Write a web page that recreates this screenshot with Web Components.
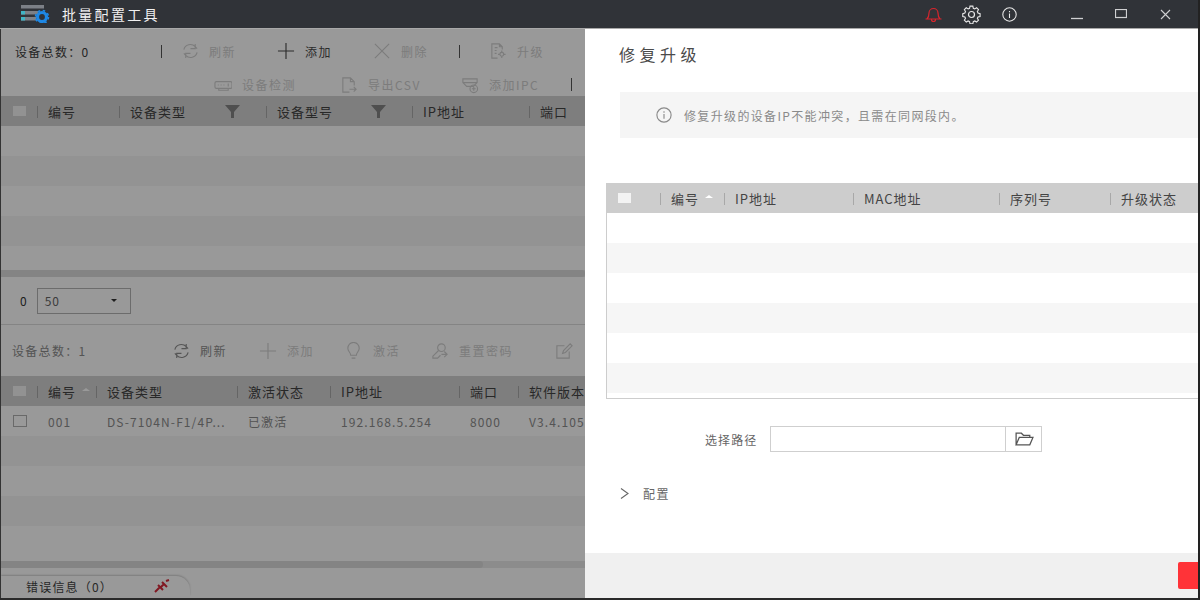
<!DOCTYPE html>
<html lang="zh">
<head>
<meta charset="utf-8">
<title>批量配置工具</title>
<style>
  html, body { margin: 0; height: 100%; overflow: hidden; background: #222; }
  body { font: 13px "Noto Sans CJK SC", "Liberation Sans", sans-serif; letter-spacing: 1px; color: #444; }
</style>
</head>
<body>
<batch-app></batch-app>

<script>
const ICONS = {
  refresh: `<path d="M3 8a7 7 0 0 1 12-3l2 2M15 2v5h-5M17 11a7 7 0 0 1-12 3l-2-2M5 17v-5h5"/>`,
  plus: `<path d="M9.500 1v17M1 9.500h17"/>`,
  cross: `<path d="M2 2l15 15M17 2L2 17"/>`,
  upgrade: `<path d="M9 17H3V2h8l3 3v3M11 2v3h3M6 6h3M6 9h2M6 12h2"/><circle cx="13.500" cy="13" r="2"/><path d="M13.500 9v2M13.500 15v2M9.500 13h2M15.500 13h2"/>`,
  detect: `<rect x="1" y="6" width="18" height="7" rx="1.500"/><path d="M4 9.500h1M7 9.500h1M10 9.500h1M15 8v3M5 13v2h10v-2"/>`,
  export: `<path d="M10 17H3V2h8l4 4v4M11 2v4h4M10 14h7M14.500 11.500L17 14l-2.500 2.500"/>`,
  camera: `<path d="M2 3h15v4l-4 4H6L2 7zM2 7h15"/><circle cx="13.500" cy="13.500" r="4"/><path d="M13.500 11.500v4M11.500 13.500h4"/>`,
  bulb: `<path d="M6 14c0-3-3-4-3-7.500a6 6 0 0 1 12 0C15 10 12 11 12 14zM7 17h4"/>`,
  key: `<circle cx="11" cy="6" r="4"/><path d="M8 9l-6 6v2h5l3-3M14 10l3 3-3 3M17 13h-6"/>`,
  edit: `<path d="M15 10v7H2V4h8M8 12l1-3 7-7 2 2-7 7z"/>`,
  bell: `<path d="M3 14c2-2 2-3 2-6a4.500 4.500 0 0 1 9 0c0 3 0 4 2 6zM1.500 14h16M7.500 14.500a2 2 0 0 0 4 0"/>`,
  gear: `<path d="M8 1.500h3l.5 2.300 1.500.7 2-1.200 2 2-1.200 2 .7 1.500 2.200.7v3l-2.200.5-.7 1.500 1.200 2-2 2-2-1.200-1.500.7-.5 2.300H8l-.5-2.300-1.500-.7-2 1.200-2-2 1.200-2-.7-1.500-2.200-.5v-3l2.200-.7.7-1.500-1.200-2 2-2 2 1.200 1.500-.7z" transform="translate(.5 -.3) scale(.94)"/><circle cx="9.500" cy="9.500" r="3"/>`,
  info: `<circle cx="9.500" cy="9.500" r="7.500"/><path d="M9.500 8.500v5M9.500 5.500v1.500"/>`,
  folder: `<path d="M2 15V4h5l2 2h6v2M2 15l3-7h13l-3 7z"/>`
};

function icon(name, size) {
  return `<svg width="${size}" height="${size}" viewBox="0 0 19 19" fill="none" stroke="currentColor" stroke-width="1.200" aria-hidden="true">${ICONS[name]}</svg>`;
}

class AppTitlebar extends HTMLElement {
  connectedCallback() {
    this.attachShadow({ mode: "open" }).innerHTML = /* html */`
    <style>
      :host { display: flex; align-items: center; height: 28px; background: #303338; color: #eee; flex: none; border-bottom: 1px solid #a9a9a9; box-sizing: content-box; }
      .logo { margin-left: 20px; width: 30px; height: 18px; }
      .title { margin-left: 12px; font-size: 14px; letter-spacing: 2.300px; color: #f0f0f0; }
      .actions { margin-left: auto; display: flex; align-items: center; }
      .act { display: flex; justify-content: center; width: 38px; color: #e8e8e8; }
      .bell { color: #d8252d; }
      .win { width: 44px; display: flex; justify-content: center; color: #cfd0d2; }
      .gap { width: 27px; }
      .end { width: 11px; }
    </style>
    <svg class="logo" viewBox="0 0 30 18">
      <g fill="#7c8087">
        <rect x="1" y="0" width="23" height="3.500"/>
        <rect x="1" y="6" width="17" height="3.500"/>
        <rect x="1" y="12" width="15" height="3.500"/>
      </g>
      <g fill="#40b4c4"><rect x="1" y="6" width="4" height="3.500"/><rect x="1" y="12" width="4" height="3.500"/></g>
      <circle cx="22" cy="12" r="4.500" fill="none" stroke="#1e88e5" stroke-width="3.200"/>
      <circle cx="22" cy="12" r="6.500" fill="none" stroke="#1e88e5" stroke-width="1.600" stroke-dasharray="2.500 2.600"/>
    </svg>
    <span class="title">批量配置工具</span>
    <div class="actions">
      <span class="act bell">${icon("bell", 19)}</span>
      <span class="act">${icon("gear", 19)}</span>
      <span class="act">${icon("info", 17)}</span>
      <span class="gap"></span>
      <span class="win"><svg width="12" height="12" viewBox="0 0 12 12"><path d="M0 10.500h12" stroke="currentColor" stroke-width="1.300"/></svg></span>
      <span class="win"><svg width="12" height="10" viewBox="0 0 12 10" fill="none"><rect x=".5" y=".5" width="11" height="8" stroke="currentColor" stroke-width="1.200"/></svg></span>
      <span class="win"><svg width="11" height="11" viewBox="0 0 11 11"><path d="M1 1l9 9M10 1l-9 9" stroke="currentColor" stroke-width="1.100"/></svg></span>
      <span class="end"></span>
    </div>`;
  }
}

class ToolButton extends HTMLElement {
  connectedCallback() {
    const w = this.getAttribute("width") || 96;
    this.attachShadow({ mode: "open" }).innerHTML = /* html */`
    <style>
      :host { display: inline-flex; align-items: center; gap: 10px; width: ${w}px; flex: none; color: #cfcfcf; white-space: nowrap; font-size: 12px; letter-spacing: 1.500px; }
      :host([active]) { color: #4a4a4a; }
      :host([soft]) { color: #8e8e8e; }
      svg { flex: none; }
    </style>
    ${icon(this.getAttribute("icon"), 18)}<slot></slot>`;
  }
}

class ToolDivider extends HTMLElement {
  connectedCallback() {
    this.attachShadow({ mode: "open" }).innerHTML = /* html */`
    <style>:host { display: block; flex: none; width: 1px; height: 13px; background: #555; }</style>`;
  }
}

class DataTable extends HTMLElement {
  connectedCallback() {
    const cols = this.getAttribute("cols").split(" ");
    const heads = this.getAttribute("heads").split(",");
    const count = +this.getAttribute("rows");
    const data = JSON.parse(this.getAttribute("data") || "[]");
    const tpl = cols.map(c => c + "px").join(" ");
    const headCells = heads.map((h, i) => {
      const label = h.replace(/[\^*]$/, "");
      const sort = h.endsWith("^") ? `<i class="sort"></i>` : "";
      const filter = h.endsWith("*") ? `<svg class="filter" width="15" height="15" viewBox="0 0 15 15"><path d="M0 1h15L9 8v6H6V8z"/></svg>` : "";
      return `<div class="cell"><span>${label}</span>${sort}${filter}</div>`;
    }).join("");
    let body = "";
    for (let r = 0; r < count; r++) {
      const row = data[r];
      const cells = row ? row.map((t, i) => `<div class="td">${t}</div>`).join("") : "";
      body += `<div class="row ${r % 2 ? "alt" : ""}"><div class="td first">${row ? `<i class="box"></i>` : ""}</div>${cells}</div>`;
    }
    this.attachShadow({ mode: "open" }).innerHTML = /* html */`
    <style>
      :host { display: block; overflow: hidden; --row: 30px; }
      .head, .row { display: grid; grid-template-columns: ${tpl}; height: var(--row); align-items: center; white-space: nowrap; }
      .head { background: var(--head, #d2d2d2); color: #444; }
      .row { color: #8c8c8c; font-size: 12px; letter-spacing: 1.100px; }
      .alt { background: #f6f6f6; }
      .check { width: var(--check-w, 13px); height: 10px; margin-left: var(--check-x, 12px); background: #fff; opacity: .75; }
      .cell { position: relative; height: 100%; display: flex; align-items: center; padding-left: 11px; overflow: hidden; }
      .cell::before { content: ""; position: absolute; left: 0; top: 10px; height: 12px; width: 1px; background: #a8a8a8; }
      .sort { margin-left: 6px; margin-bottom: 3px; border: 4px solid transparent; border-top: 0; border-bottom: 3px solid #fff; }
      .filter { position: absolute; right: 26px; fill: #7c7c7c; opacity: .9; }
      .td { padding-left: 11px; overflow: hidden; text-overflow: ellipsis; }
      .first { padding-left: 12px; display: flex; }
      .box { width: 12px; height: 10px; border: 1px solid #b0b0b0; }
    </style>
    <div class="head"><i class="check"></i>${headCells}</div>
    ${body}`;
  }
}

class ScrollTrack extends HTMLElement {
  connectedCallback() {
    this.attachShadow({ mode: "open" }).innerHTML = /* html */`
    <style>
      :host { display: block; height: 7px; background: #e9e9e9; flex: none; }
      div { height: 100%; width: var(--thumb, 100%); background: #dcdcdc; border-radius: 0 4px 4px 0; }
    </style><div></div>`;
  }
}

class SelectBox extends HTMLElement {
  connectedCallback() {
    this.attachShadow({ mode: "open" }).innerHTML = /* html */`
    <style>
      :host { display: flex; align-items: center; justify-content: space-between; width: 94px; height: 26px; box-sizing: border-box; border: 1px solid #b5b5b5; padding: 0 13px 0 7px; color: #666; font-size: 12px; }
      i { border: 3px solid transparent; border-bottom: 0; border-top: 3px solid #333; }
    </style><slot></slot><i></i>`;
  }
}

class ModalMask extends HTMLElement {
  connectedCallback() {
    this.attachShadow({ mode: "open" }).innerHTML = /* html */`
    <style>:host { display: block; position: absolute; inset: 0; background: rgba(0,0,0,.4); }</style>`;
  }
}

class DevicePane extends HTMLElement {
  connectedCallback() {
    const row = JSON.stringify([["001", "DS-7104N-F1/4P...", "已激活", "192.168.5.254", "8000", "V3.4.105"]]).replace(/"/g, "&quot;");
    this.attachShadow({ mode: "open" }).innerHTML = /* html */`
    <style>
      :host { display: flex; flex-direction: column; position: relative; width: 585px; flex: none; background: #fff; overflow: hidden; box-sizing: border-box; border-left: 1px solid #333; }
      .bar { display: flex; align-items: center; white-space: nowrap; flex: none; }
      .top { height: 44px; padding-left: 14px; }
      .count { width: 176px; color: #3c3c3c; font-size: 12px; letter-spacing: 1.300px; }
      .second { height: 23px; padding-left: 213px; }
      .pad { width: 24px; }
      .pager { height: 47px; padding-left: 19px; gap: 9px; color: #333; border-bottom: 1px solid #ddd; font-size: 12px; }
      .lower { height: 51px; padding-left: 11px; }
      .lower .count { width: 175px; color: #8c8c8c; }
      .spacer { height: 7px; flex: none; }
      .tab { margin-top: 8px; width: 189px; height: 20px; flex: none; display: flex; align-items: center; box-sizing: border-box; padding-left: 25px; background: #fff; border-radius: 0 14px 0 0; box-shadow: 0 -1px 2px rgba(0,0,0,.2); color: #444; font-size: 12px; letter-spacing: 1.200px; }
      .tab svg { margin-left: 41px; }
      data-table.lowert { flex: none; height: 185px; }
    </style>
    <div class="bar top">
      <span class="count">设备总数：0</span>
      <tool-divider></tool-divider><span class="pad" style="width:23px"></span>
      <tool-button icon="refresh">刷新</tool-button>
      <tool-button icon="plus" active>添加</tool-button>
      <tool-button icon="cross" width="86">删除</tool-button>
      <tool-divider></tool-divider><span class="pad" style="width:35px"></span>
      <tool-button icon="upgrade">升级</tool-button>
    </div>
    <div class="bar second">
      <tool-button icon="detect" width="126">设备检测</tool-button>
      <tool-button icon="export" width="121">导出CSV</tool-button>
      <tool-button icon="camera" width="110">添加IPC</tool-button>
      <tool-divider></tool-divider>
    </div>
    <data-table style="flex:none;height:174px" cols="36 82 147 146 117 100" heads="编号,设备类型*,设备型号*,IP地址,端口" rows="5"></data-table>
    <scroll-track></scroll-track>
    <div class="bar pager"><span>0</span><select-box>50</select-box></div>
    <div class="bar lower">
      <span class="count">设备总数：1</span>
      <tool-button icon="refresh" soft width="87">刷新</tool-button>
      <tool-button icon="plus" width="86">添加</tool-button>
      <tool-button icon="bulb" width="86">激活</tool-button>
      <tool-button icon="key" width="124">重置密码</tool-button>
      <tool-button icon="edit" width="30"></tool-button>
    </div>
    <data-table class="lowert" cols="36 59 141 93 129 59 150" heads="编号^,设备类型,激活状态,IP地址,端口,软件版本" rows="5" data="${row}"></data-table>
    <scroll-track style="--thumb:482px"></scroll-track>
    <div class="tab"><span>错误信息（0）</span>
      <svg width="16" height="14" viewBox="0 0 16 14" fill="none" stroke="#d8283a" stroke-width="2"><path d="M1 13l5-5M4 6l5 5M6 9l4-4M8 3l5 5M12 2l3-1"/></svg>
    </div>
    <modal-mask></modal-mask>`;
  }
}

class RepairDrawer extends HTMLElement {
  connectedCallback() {
    this.attachShadow({ mode: "open" }).innerHTML = /* html */`
    <style>
      :host { display: flex; flex-direction: column; flex: 1; min-width: 0; background: #fff; }
      h1 { margin: 0; height: 63px; padding: 12px 0 0 34px; box-sizing: border-box; font-size: 16px; font-weight: 400; letter-spacing: 4.500px; color: #4a4a4a; line-height: 26px; }
      .notice { margin-left: 35px; height: 46px; background: #f5f5f5; display: flex; align-items: center; padding-left: 35px; gap: 11px; color: #8a8a8a; font-size: 12px; letter-spacing: 1.350px; }
      data-table { margin: 45px 0 0 21px; height: 216px; box-sizing: border-box; border: 1px solid #cdcdcd; border-top: 0; border-right: 0; --head: #cdcdcd; --check-w: 13px; --check-x: 11px; }
      .path { display: flex; align-items: center; margin-top: 27px; height: 26px; padding-left: 120px; color: #666; font-size: 12px; letter-spacing: 1.100px; }
      .input { margin-left: 13px; width: 235px; height: 100%; box-sizing: border-box; border: 1px solid #cfcfcf; border-right: 0; }
      .pick { width: 37px; height: 100%; box-sizing: border-box; border: 1px solid #cfcfcf; display: flex; align-items: center; justify-content: center; color: #555; }
      .config { display: flex; align-items: center; margin-top: 30px; height: 22px; padding-left: 35px; gap: 14px; color: #666; font-size: 12px; letter-spacing: 1.500px; }
      footer { margin-top: auto; height: 45px; flex: none; background: #f0f0f0; display: flex; justify-content: flex-end; align-items: flex-start; padding-top: 9px; box-sizing: border-box; }
      .danger { width: 20px; height: 27px; background: #ff3338; border-radius: 2px 0 0 2px; }
    </style>
    <h1>修复升级</h1>
    <div class="notice">${icon("info", 18)}<span>修复升级的设备IP不能冲突，且需在同网段内。</span></div>
    <data-table cols="53 64 129 146 111 89" heads="编号^,IP地址,MAC地址,序列号,升级状态" rows="6"></data-table>
    <div class="path">选择路径<span class="input"></span><span class="pick">${icon("folder", 20)}</span></div>
    <div class="config"><svg width="9" height="11" viewBox="0 0 9 11" fill="none" stroke="#666" stroke-width="1.100"><path d="M1 .5l7 5-7 5"/></svg><span>配置</span></div>
    <footer><span class="danger"></span></footer>`;
  }
}

class BatchApp extends HTMLElement {
  connectedCallback() {
    this.attachShadow({ mode: "open" }).innerHTML = /* html */`
    <style>
      :host { display: flex; flex-direction: column; width: 1200px; height: 600px; box-sizing: border-box; border-right: 2px solid #222; border-bottom: 2px solid #2a2a2a; overflow: hidden; }
      main { flex: 1; display: flex; min-height: 0; }
    </style>
    <app-titlebar></app-titlebar>
    <main><device-pane></device-pane><repair-drawer></repair-drawer></main>`;
  }
}

customElements.define("app-titlebar", AppTitlebar);
customElements.define("tool-button", ToolButton);
customElements.define("tool-divider", ToolDivider);
customElements.define("data-table", DataTable);
customElements.define("scroll-track", ScrollTrack);
customElements.define("select-box", SelectBox);
customElements.define("modal-mask", ModalMask);
customElements.define("device-pane", DevicePane);
customElements.define("repair-drawer", RepairDrawer);
customElements.define("batch-app", BatchApp);
</script>
</body>
</html>
